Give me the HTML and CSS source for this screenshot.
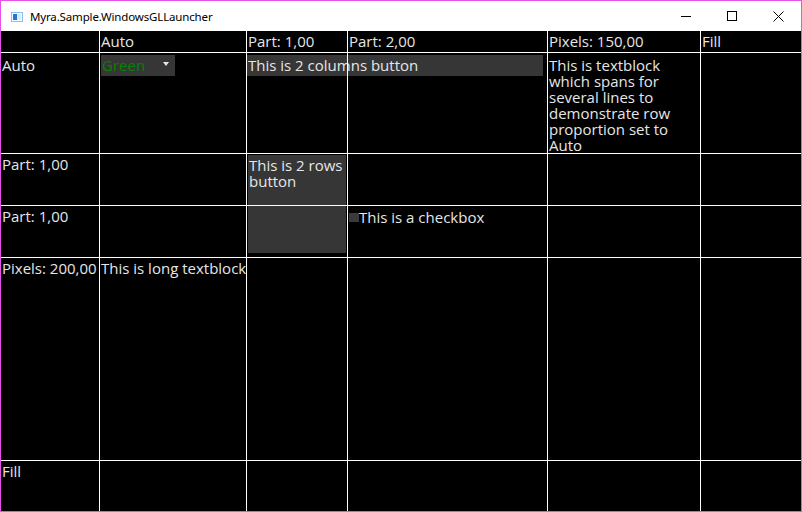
FILE: index.html
```html
<!DOCTYPE html>
<html>
<head>
<meta charset="utf-8">
<link rel="stylesheet" href="styles.css">
</head>
<body>
<div class="window">
  <div class="titlebar">
    <svg class="appicon" width="12" height="10" viewBox="0 0 12 10">
      <rect x="0.5" y="0.5" width="11" height="9" fill="#ffffff" stroke="#8cc0ec"/>
      <rect x="2" y="2" width="4" height="6" fill="#1e78d7"/>
      <rect x="6" y="2" width="4" height="6" fill="#dcecfa"/>
    </svg>
    <span class="title">Myra.Sample.WindowsGLLauncher</span>
    <div class="controls">
      <div class="ctl"><svg width="10" height="10" viewBox="0 0 10 10"><path d="M0 5.5H10" stroke="#000" stroke-width="1"/></svg></div>
      <div class="ctl"><svg width="10" height="10" viewBox="0 0 10 10"><rect x="0.5" y="0.5" width="9" height="9" fill="none" stroke="#000" stroke-width="1"/></svg></div>
      <div class="ctl"><svg width="11" height="11" viewBox="0 0 11 11"><path d="M0.5 0.5L10.5 10.5M10.5 0.5L0.5 10.5" stroke="#000" stroke-width="1"/></svg></div>
    </div>
  </div>
  <div class="grid">
    <div class="hdr c2">Auto</div>
    <div class="hdr c3">Part: 1,00</div>
    <div class="hdr c4">Part: 2,00</div>
    <div class="hdr c5">Pixels: 150,00</div>
    <div class="hdr c6">Fill</div>

    <div class="lbl r2">Auto</div>
    <div class="lbl r3">Part: 1,00</div>
    <div class="lbl r4">Part: 1,00</div>
    <div class="lbl r5">Pixels: 200,00</div>
    <div class="lbl r6">Fill</div>

    <div class="combo"><span class="combo-text">Green</span><span class="arrow"></span></div>
    <div class="btn btn-cols">This is 2 columns button</div>
    <div class="textblock">This is textblock which spans for several lines to demonstrate row proportion set to Auto</div>
    <div class="btn btn-rows">This is 2 rows button</div>
    <div class="check"><span class="box"></span><span>This is a checkbox</span></div>
    <div class="longtext">This is long textblock</div>

    <div class="lines">
      <div class="vl v1"></div><div class="vl v2"></div><div class="vl v3"></div><div class="vl v4"></div><div class="vl v5"></div>
      <div class="hl h1"></div><div class="hl h2"></div><div class="hl h3"></div><div class="hl h4"></div><div class="hl h5"></div>
    </div>
  </div>
</div>
</body>
</html>
```

FILE: styles.css
```css
html, body {
  margin: 0;
  padding: 0;
  background: #000;
}
.window {
  width: 802px;
  height: 512px;
  box-sizing: border-box;
  border: 1px solid #e94fe9;
  display: flex;
  flex-direction: column;
  background: #000;
}
.titlebar {
  height: 30px;
  flex: none;
  background: #fff;
  display: flex;
  align-items: center;
  font-family: "Noto Sans", "DejaVu Sans", sans-serif;
  font-size: 11.5px;
  letter-spacing: -0.15px;
  color: #000;
}
.appicon {
  margin-left: 10px;
  margin-top: 2px;
  flex: none;
}
.title {
  margin-left: 7px;
  margin-top: 1px;
}
.controls {
  margin-left: auto;
  display: flex;
  height: 100%;
}
.ctl {
  width: 46px;
  height: 100%;
  display: flex;
  align-items: center;
  justify-content: center;
}
.grid {
  position: relative;
  display: grid;
  grid-template-columns: 98px 146px 100px 199px 152px 100px;
  grid-template-rows: 21px 100px 51px 51px 202px 50px;
  gap: 1px;
  font-family: "Open Sans", "Noto Sans", sans-serif;
  font-size: 15px;
  line-height: 16px;
  color: #e6e6e6;
}
.hdr {
  grid-row: 1;
  padding: 2px 0 0 1px;
  white-space: nowrap;
}
.c2 { grid-column: 2; }
.c3 { grid-column: 3; }
.c4 { grid-column: 4; }
.c5 { grid-column: 5; }
.c6 { grid-column: 6; }
.lbl {
  grid-column: 1;
  padding: 2px 0 0 1px;
  white-space: nowrap;
}
.r2 { grid-row: 2; padding-top: 4px; }
.r3 { grid-row: 3; }
.r4 { grid-row: 4; }
.r5 { grid-row: 5; }
.r6 { grid-row: 6; }

.combo {
  grid-row: 2;
  grid-column: 2;
  align-self: start;
  justify-self: start;
  margin: 2px 0 0 1px;
  width: 74px;
  height: 21px;
  background: #363636;
  display: flex;
  align-items: flex-start;
  box-sizing: border-box;
  padding: 2px 0 0 1px;
  position: relative;
}
.combo-text {
  color: #038203;
}
.arrow {
  position: absolute;
  left: 62px;
  top: 7px;
  width: 0;
  height: 0;
  border-left: 3.5px solid transparent;
  border-right: 3.5px solid transparent;
  border-top: 4px solid #e6e6e6;
}
.btn {
  background: #363636;
  box-sizing: border-box;
  padding: 2px 0 0 1px;
}
.btn-cols {
  grid-row: 2;
  grid-column: 3 / 5;
  align-self: start;
  width: 296px;
  height: 21px;
  margin-top: 2px;
  white-space: nowrap;
}
.textblock {
  grid-row: 2;
  grid-column: 5;
  padding: 4px 0 0 1px;
}
.btn-rows {
  grid-row: 3 / 5;
  grid-column: 3;
  margin: 1px 1px 4px 1px;
}
.check {
  grid-row: 4;
  grid-column: 4;
  display: flex;
  align-items: flex-start;
  padding: 3px 0 0 1px;
  white-space: nowrap;
}
.box {
  width: 10px;
  height: 9px;
  background: #3a3a3a;
  margin-top: 4px;
  flex: none;
}
.longtext {
  grid-row: 5;
  grid-column: 2;
  padding: 2px 0 0 1px;
  white-space: nowrap;
}

.lines {
  position: absolute;
  inset: 0;
  display: grid;
  grid-template-columns: 98px 146px 100px 199px 152px 100px;
  grid-template-rows: 21px 100px 51px 51px 202px 50px;
  gap: 1px;
  pointer-events: none;
}
.vl {
  grid-row: 1 / -1;
  box-shadow: 1px 0 0 #fff;
}
.hl {
  grid-column: 1 / -1;
  box-shadow: 0 1px 0 #fff;
}
.v1 { grid-column: 1; }
.v2 { grid-column: 2; }
.v3 { grid-column: 3; }
.v4 { grid-column: 4; }
.v5 { grid-column: 5; }
.h1 { grid-row: 1; }
.h2 { grid-row: 2; }
.h3 { grid-row: 3; }
.h4 { grid-row: 4; }
.h5 { grid-row: 5; }
```
